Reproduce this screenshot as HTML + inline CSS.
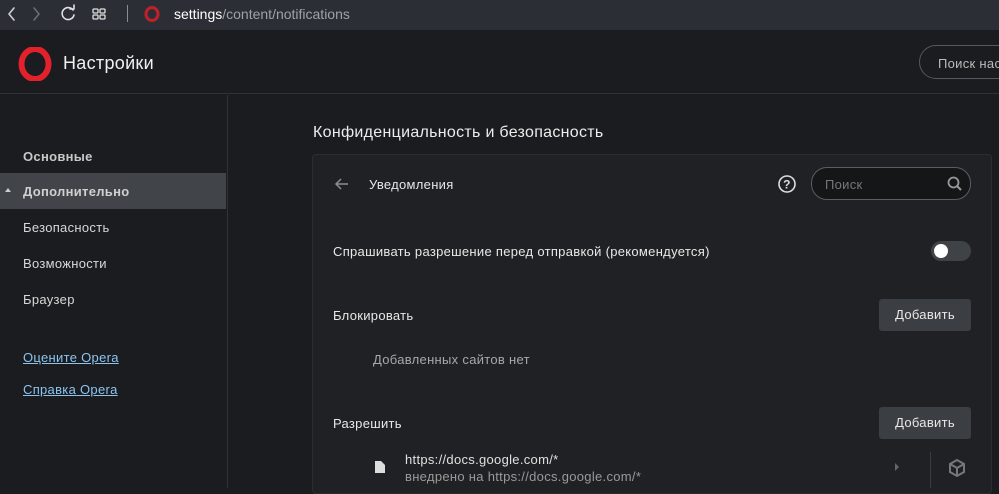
<!DOCTYPE html>
<html><head><meta charset="utf-8"><style>
*{margin:0;padding:0;box-sizing:border-box}
body{width:999px;height:488px;overflow:hidden;background:#1b1c1f;font-family:"Liberation Sans",sans-serif;color:#e8e8e8;position:relative;letter-spacing:0.3px}
.abs{position:absolute}
.tb{left:0;top:0;width:999px;height:30px;background:#2b2f35}
.hdr{left:0;top:30px;width:999px;height:64px;border-bottom:1px solid #303236;background:#1b1c1f}
.side{left:0;top:95px;width:228px;height:393px;border-right:1px solid #303236}
.nav{position:absolute;left:23px;font-size:13px;color:#d8d8d8}
.card{left:312px;top:154px;width:680px;height:340px;background:#202124;border:1px solid #2c2d30;border-radius:4px}
.btn{position:absolute;width:92px;height:32px;background:#3b3e42;border-radius:3px;color:#e8e8e8;font-size:13px;text-align:center;line-height:32px}
.t13{font-size:13px}
</style></head><body>
<div class="abs tb">
<svg class="abs" style="left:0;top:0" width="120" height="30"><g fill="none" stroke-width="1.6" stroke-linecap="round" stroke-linejoin="round"><path d="M14 8l-5 6 5 6" stroke="#d0d0d0"/><path d="M34 8l5 6-5 6" stroke="#6b6f75"/><path d="M73 10a6 6 0 1 0 1 5" stroke="#e0e0e0"/><path d="M70 9h4v-4" stroke="#e0e0e0"/></g><g fill="none" stroke="#e0e0e0" stroke-width="1.3"><rect x="93" y="9" width="5" height="4" rx="1"/><rect x="100" y="9" width="5" height="4" rx="1"/><rect x="93" y="15" width="5" height="4" rx="1"/><rect x="100" y="15" width="5" height="4" rx="1"/></g></svg>
<div class="abs" style="left:127px;top:5px;width:1px;height:17px;background:#8a8d92"></div>
<svg class="abs" style="left:144px;top:6px" width="16" height="16"><ellipse cx="8" cy="8" rx="6" ry="6.5" fill="none" stroke="#c0202a" stroke-width="3"/></svg>
<div class="abs" style="left:174px;top:6px;font-size:14px;color:#9ea2a8;letter-spacing:0">
<span style="color:#fff">settings</span>/content/notifications</div>
</div>
<div class="abs hdr">
<svg class="abs" style="left:18px;top:17px" width="34" height="34"><ellipse cx="17" cy="17" rx="13.5" ry="15" fill="none" stroke="#e1212b" stroke-width="6"/></svg>
<div class="abs" style="left:63px;top:23px;font-size:18px;color:#f0f0f0">Настройки</div>
<div class="abs" style="left:919px;top:15px;width:100px;height:34px;border:1px solid #55585d;border-radius:17px;font-size:13px;color:#bbb;padding:10px 0 0 18px">Поиск нас</div>
</div>
<div class="abs side">
<div class="nav" style="top:54px;font-weight:bold;color:#c8c8c8">Основные</div>
<div class="abs" style="left:0;top:78px;width:226px;height:36px;background:#414449"></div>
<div class="abs" style="left:5px;top:93px;width:0;height:0;border-left:3px solid transparent;border-right:3px solid transparent;border-bottom:4px solid #ccc"></div>
<div class="nav" style="top:89px;font-weight:bold;color:#d0d0d0">Дополнительно</div>
<div class="nav" style="top:125px">Безопасность</div>
<div class="nav" style="top:161px">Возможности</div>
<div class="nav" style="top:197px">Браузер</div>
<div class="nav" style="top:255px;color:#8cc4f0;text-decoration:underline">Оцените Opera</div>
<div class="nav" style="top:287px;color:#8cc4f0;text-decoration:underline">Справка Opera</div>
</div>
<div class="abs" style="left:313px;top:124px;font-size:16px;color:#ececec">Конфиденциальность и безопасность</div>
<div class="abs card">
<svg class="abs" style="left:20px;top:20px" width="18" height="18"><path d="M15 9H3M8 4L3 9l5 5" fill="none" stroke="#8a8d92" stroke-width="1.5"/></svg>
<div class="abs t13" style="left:56px;top:22px;color:#e6e6e6">Уведомления</div>
<svg class="abs" style="left:464px;top:19px" width="20" height="20"><circle cx="10" cy="10" r="8" fill="none" stroke="#ddd" stroke-width="1.6"/><text x="10" y="14.5" font-size="12" font-weight="bold" fill="#ddd" text-anchor="middle" font-family="Liberation Sans">?</text></svg>
<div class="abs" style="left:498px;top:12px;width:160px;height:33px;border:1px solid #5a5d62;border-radius:16px;background:#151618;font-size:13px;color:#777;padding:9px 0 0 13px">Поиск</div>
<svg class="abs" style="left:633px;top:20px" width="18" height="18"><circle cx="7.5" cy="7.5" r="5" fill="none" stroke="#999" stroke-width="1.8"/><path d="M11 11l4 4" stroke="#999" stroke-width="2"/></svg>
<div class="abs t13" style="left:20px;top:89px">Спрашивать разрешение перед отправкой (рекомендуется)</div>
<div class="abs" style="left:618px;top:86px;width:40px;height:20px;border-radius:10px;background:#3f4246"></div>
<div class="abs" style="left:621px;top:89px;width:14px;height:14px;border-radius:7px;background:#fff"></div>
<div class="abs t13" style="left:20px;top:153px">Блокировать</div>
<div class="btn" style="left:566px;top:144px">Добавить</div>
<div class="abs t13" style="left:60px;top:197px;color:#a8a8a8">Добавленных сайтов нет</div>
<div class="abs t13" style="left:20px;top:261px">Разрешить</div>
<div class="btn" style="left:566px;top:252px">Добавить</div>
<svg class="abs" style="left:61px;top:305px" width="12" height="14"><path d="M1 1h6l4 4v8H1z" fill="#ddd"/></svg>
<div class="abs t13" style="left:92px;top:297px;color:#e0e0e0">https://docs.google.com/*</div>
<div class="abs" style="left:92px;top:314px;font-size:13px;color:#9a9a9a">внедрено на https://docs.google.com/*</div>
<div class="abs" style="left:582px;top:308px;width:0;height:0;border-top:4px solid transparent;border-bottom:4px solid transparent;border-left:4px solid #666"></div>
<div class="abs" style="left:617px;top:297px;width:1px;height:36px;background:#3a3c40"></div>
<svg class="abs" style="left:635px;top:303px" width="18" height="20"><path d="M9 2l7 4v8l-7 4-7-4V6zM2 6l7 4 7-4M9 10v8" fill="none" stroke="#777" stroke-width="2"/></svg>
</div>
</body></html>
